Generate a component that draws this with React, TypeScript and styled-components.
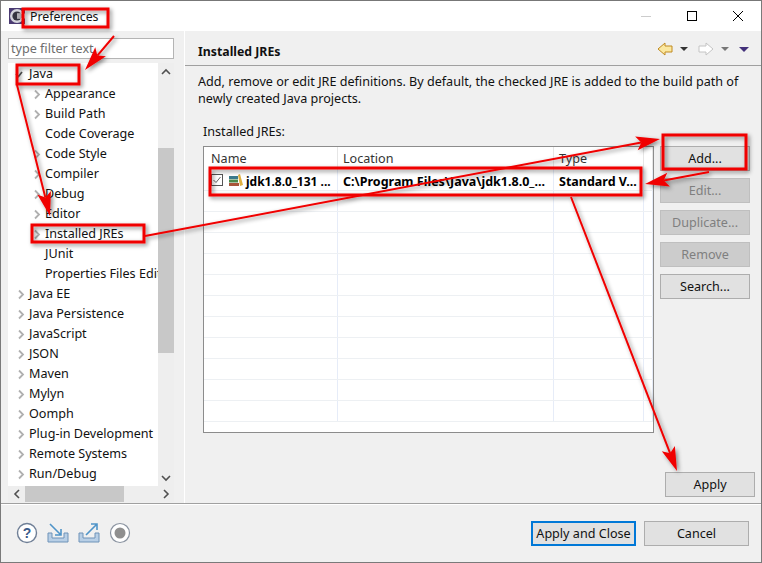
import React from "react";
import styled, { createGlobalStyle } from "styled-components";

const Global = createGlobalStyle`
  html, body { margin: 0; padding: 0; background: #f0f0f0; }
  * { box-sizing: border-box; }
  #root { width: 762px; height: 563px; }
`;

const Window = styled.div`
  position: relative;
  width: 762px;
  height: 563px;
  display: flex;
  flex-direction: column;
  background: #f0f0f0;
  border: 1px solid #7a7a7a;
  border-top-color: #777;
  font-family: "Noto Sans", "Open Sans", sans-serif;
  font-size: 12.6px;
  color: #111;
  overflow: hidden;
`;

const TitleBar = styled.div`
  height: 30px;
  flex: none;
  background: #fff;
  display: flex;
  align-items: center;
  padding-left: 8px;
`;
const TitleText = styled.span`
  font-size: 12.3px;
  flex: 1;
  margin: 1px 0 0 5px;
`;
const WinBtn = styled.div`
  width: 46px;
  height: 30px;
  display: flex;
  align-items: center;
  justify-content: center;
`;

const Main = styled.div`
  flex: 1;
  display: flex;
  min-height: 0;
`;

const Left = styled.div`
  width: 184px;
  flex: none;
  padding: 7px 10px 0 7px;
  display: flex;
  flex-direction: column;
  border-right: 1px solid #fff;
`;
const Filter = styled.div`
  height: 21px;
  flex: none;
  border: 1px solid #b4b4b4;
  background: #fff;
  color: #6d6d6d;
  line-height: 19px;
  padding-left: 2px;
  margin-bottom: 4px;
  white-space: nowrap;
`;
const TreeWrap = styled.div`
  flex: 1;
  display: grid;
  grid-template-columns: 150px 16px;
  grid-template-rows: 423px 16px;
  min-height: 0;
`;
const Tree = styled.div`
  background: #fff;
  overflow: hidden;
`;
const Row = styled.div<{ $level: number }>`
  height: 20px;
  display: flex;
  align-items: center;
  padding: 2px 0 0 ${(p) => (p.$level ? 21 : 5)}px;
  white-space: nowrap;
  line-height: 18px;
`;
const Twisty = styled.span`
  width: 16px;
  flex: none;
  display: flex;
`;
const VBar = styled.div`
  background: #eee;
  display: flex;
  flex-direction: column;
  justify-content: space-between;
`;
const VTrack = styled.div`
  flex: 1;
  padding: 68px 0 116px;
  display: flex;
`;
const VThumb = styled.div`
  flex: 1;
  background: #c8c8c8;
`;
const ArrowBox = styled.div`
  height: 17px;
  display: flex;
  align-items: center;
  justify-content: center;
  flex: none;
`;
const HBar = styled.div`
  background: #eee;
  display: flex;
  align-items: center;
  grid-column: 1 / span 2;
`;
const HBtn = styled.div`
  width: 17px;
  height: 16px;
  flex: none;
  display: flex;
  align-items: center;
  justify-content: center;
`;
const HTrack = styled.div`
  flex: 1;
  height: 16px;
  padding-right: 33px;
  display: flex;
`;
const HThumb = styled.div`
  flex: 1;
  background: #c8c8c8;
`;

const Right = styled.div`
  flex: 1;
  min-width: 0;
  display: flex;
  flex-direction: column;
`;
const Header = styled.div`
  height: 35px;
  flex: none;
  display: flex;
  align-items: center;
  border-bottom: 1px solid #a0a0a0;
  padding: 6px 12px 0 13px;
`;
const HeaderTitle = styled.div`
  flex: 1;
  font-weight: 700;
  font-size: 12.3px;
`;
const NavIcons = styled.svg`
  margin-top: -4px;
  flex: none;
`;
const Desc = styled.p`
  margin: 0;
  padding: 7px 0 0 13px;
  line-height: 17px;
  height: 56px;
  flex: none;
  white-space: pre;
`;
const Label = styled.div`
  padding: 1px 0 0 18px;
  height: 24px;
  line-height: 18px;
  flex: none;
`;
const Content = styled.div`
  display: flex;
  gap: 6px;
  padding-left: 18px;
  height: 287px;
  flex: none;
`;
const Table = styled.div`
  width: 451px;
  height: 287px;
  flex: none;
  background: #fff;
  border: 1px solid #8c8c8c;
  overflow: hidden;
`;
const THead = styled.div`
  display: grid;
  grid-template-columns: 134px 216px 90px 9px;
  height: 23px;
`;
const Th = styled.div`
  border-right: 1px solid #e6e6e6;
  padding: 3px 0 0 5px;
  line-height: 18px;
  color: #333;
  &:first-child { padding-left: 7px; }
`;
const Tr = styled.div`
  display: grid;
  grid-template-columns: 134px 216px 90px 9px;
  height: 21px;
  border-bottom: 1px solid #edf0f3;
`;
const Td = styled.div<{ $first?: boolean }>`
  border-right: 1px solid #e6ecf8;
  padding: 2px 0 0 5px;
  display: flex;
  align-items: center;
  font-weight: 700;
  font-size: ${(p) => (p.$first ? 12 : 12.5)}px;
  white-space: nowrap;
  overflow: hidden;
  color: #000;
`;
const Check = styled.span`
  width: 12px;
  height: 12px;
  border: 1px solid #555;
  display: flex;
  margin: -2px 5px 0 2px;
  flex: none;
  background: #fff;
`;
const JdkIcon = styled.svg`
  margin: -2px 2px 0 0;
  flex: none;
`;
const Side = styled.div`
  display: flex;
  flex-direction: column;
  gap: 7px;
  width: 90px;
`;
const Button = styled.button<{ $disabled?: boolean; $w?: number; $primary?: boolean }>`
  width: ${(p) => p.$w ?? 90}px;
  height: 25px;
  flex: none;
  padding: 0;
  font: inherit;
  background: ${(p) => (p.$disabled ? "#cccccc" : "#e1e1e1")};
  color: ${(p) => (p.$disabled ? "#7f7f7f" : "#111")};
  border: ${(p) => (p.$primary ? "2px solid #0078d7" : p.$disabled ? "1px solid #bfbfbf" : "1px solid #adadad")};
`;
const ApplyRow = styled.div`
  display: flex;
  justify-content: flex-end;
  padding: 39px 6px 0 0;
`;

const Footer = styled.div`
  height: 59px;
  flex: none;
  border-top: 1px solid #a0a0a0;
  box-shadow: inset 0 1px 0 #fff;
  display: flex;
  align-items: flex-start;
  padding: 17px 12px 0 15px;
`;
const FootIcons = styled.div`
  display: flex;
  gap: 9px;
  flex: 1;
  padding-top: 1px;
`;
const FootBtns = styled.div`
  display: flex;
  gap: 8px;
`;
const Overlay = styled.svg`
  position: absolute;
  left: -1px;
  top: -1px;
  width: 762px;
  height: 563px;
  pointer-events: none;
`;

const Chev = ({ open }: { open?: boolean }) =>
  open ? (
    <svg width="16" height="16" viewBox="0 0 16 16">
      <path d="M3 8 L5.5 10.5 L9 6" fill="none" stroke="#555" strokeWidth="1.7" />
    </svg>
  ) : (
    <svg width="16" height="16" viewBox="0 0 16 16">
      <path d="M6 4.5 L10 8.5 L6 12.5" fill="none" stroke="#b0b0b0" strokeWidth="1.8" />
    </svg>
  );

const items: [string, number, boolean][] = [
  ["Java", 0, true], ["Appearance", 1, true], ["Build Path", 1, true], ["Code Coverage", 1, false],
  ["Code Style", 1, true], ["Compiler", 1, true], ["Debug", 1, true], ["Editor", 1, true],
  ["Installed JREs", 1, true], ["JUnit", 1, false], ["Properties Files Edit", 1, false],
  ["Java EE", 0, true], ["Java Persistence", 0, true], ["JavaScript", 0, true], ["JSON", 0, true],
  ["Maven", 0, true], ["Mylyn", 0, true], ["Oomph", 0, true], ["Plug-in Development", 0, true],
  ["Remote Systems", 0, true], ["Run/Debug", 0, true],
];

const Rect = ({ x, y, w, h }: { x: number; y: number; w: number; h: number }) => (
  <rect x={x} y={y} width={w} height={h} fill="none" stroke="#f00000" strokeWidth="3" />
);
const Arrow = ({ x1, y1, x2, y2 }: { x1: number; y1: number; x2: number; y2: number }) => {
  const a = Math.atan2(y2 - y1, x2 - x1);
  const L = 24, W = 7;
  const bx = x2 - L * Math.cos(a), by = y2 - L * Math.sin(a);
  const nx = -Math.sin(a) * W, ny = Math.cos(a) * W;
  const ix = x2 - (L - 5) * Math.cos(a), iy = y2 - (L - 5) * Math.sin(a);
  return (
    <g>
      <line x1={x1} y1={y1} x2={ix} y2={iy} stroke="#f00000" strokeWidth="2" />
      <polygon points={`${x2},${y2} ${bx + nx},${by + ny} ${ix},${iy} ${bx - nx},${by - ny}`} fill="#f00000" />
    </g>
  );
};

export default function App() {
  const rows = Array.from({ length: 12 });
  return (
    <Window>
      <Global />
      <TitleBar>
        <svg width="16" height="16" viewBox="0 0 16 16">
          <rect x="0" y="0" width="16" height="16" fill="#4a3a72" />
          <circle cx="8" cy="8" r="7" fill="#d4d4dc" />
          <circle cx="8" cy="8" r="4.6" fill="#34343f" />
          <path d="M8 5.5 h8 v5 h-8 z" fill="#fff" />
          <path d="M8 7 h7 M8 9 h7" stroke="#34343f" strokeWidth="0.8" />
        </svg>
        <TitleText>Preferences</TitleText>
        <WinBtn>
          <svg width="10" height="10" viewBox="0 0 10 10"><path d="M0 5.5 H10" stroke="#ccc" /></svg>
        </WinBtn>
        <WinBtn>
          <svg width="10" height="10" viewBox="0 0 10 10"><rect x="0.5" y="0.5" width="9" height="9" fill="none" stroke="#000" /></svg>
        </WinBtn>
        <WinBtn>
          <svg width="10" height="10" viewBox="0 0 10 10"><path d="M0 0 L10 10 M10 0 L0 10" stroke="#000" /></svg>
        </WinBtn>
      </TitleBar>
      <Main>
        <Left>
          <Filter>type filter text</Filter>
          <TreeWrap>
            <Tree>
              {items.map(([t, l, c], i) => (
                <Row key={i} $level={l}>
                  <Twisty>{c ? <Chev open={t === "Java"} /> : null}</Twisty>
                  <span>{t}</span>
                </Row>
              ))}
            </Tree>
            <VBar>
              <ArrowBox>
                <svg width="10" height="8" viewBox="0 0 10 8"><path d="M1 6 L5 2 L9 6" fill="none" stroke="#505050" strokeWidth="1.6" /></svg>
              </ArrowBox>
              <VTrack><VThumb /></VTrack>
              <ArrowBox>
                <svg width="10" height="8" viewBox="0 0 10 8"><path d="M1 2 L5 6 L9 2" fill="none" stroke="#505050" strokeWidth="1.6" /></svg>
              </ArrowBox>
            </VBar>
            <HBar>
              <HBtn>
                <svg width="8" height="10" viewBox="0 0 8 10"><path d="M6 1 L2 5 L6 9" fill="none" stroke="#505050" strokeWidth="1.6" /></svg>
              </HBtn>
              <HTrack><HThumb /></HTrack>
              <HBtn>
                <svg width="8" height="10" viewBox="0 0 8 10"><path d="M2 1 L6 5 L2 9" fill="none" stroke="#505050" strokeWidth="1.6" /></svg>
              </HBtn>
            </HBar>
          </TreeWrap>
        </Left>
        <Right>
          <Header>
            <HeaderTitle>Installed JREs</HeaderTitle>
            <NavIcons width="92" height="16" viewBox="0 0 92 16">
              <path d="M1 8 L8 2 V5 H15 V11 H8 V14 Z" fill="#fbe8a0" stroke="#c08a20" />
              <path d="M23 6 H31 L27 10 Z" fill="#333" />
              <path d="M56 8 L49 2 V5 H42 V11 H49 V14 Z" fill="#fff" stroke="#c4c4c4" />
              <path d="M64 6 H72 L68 10 Z" fill="#777" />
              <path d="M82 6 H92 L87 11 Z" fill="#43307a" />
            </NavIcons>
          </Header>
          <Desc>{"Add, remove or edit JRE definitions. By default, the checked JRE is added to the build path of\nnewly created Java projects."}</Desc>
          <Label>Installed JREs:</Label>
          <Content>
            <Table>
              <THead>
                <Th>Name</Th><Th>Location</Th><Th>Type</Th><Th />
              </THead>
              {rows.map((_, i) => (
                <Tr key={i}>
                  <Td $first>
                    {i === 0 && (
                      <>
                        <Check>
                          <svg width="10" height="10" viewBox="0 0 10 10"><path d="M1.5 5 L4 7.5 L8.5 2" fill="none" stroke="#666" /></svg>
                        </Check>
                        <JdkIcon width="16" height="16" viewBox="0 0 16 16">
                          <rect x="1" y="4" width="9" height="3" fill="#3b7a8c" />
                          <rect x="1" y="7.5" width="9" height="3" fill="#4b8a4b" />
                          <rect x="1" y="11" width="10" height="3" fill="#a9553a" />
                          <path d="M10 3 L12 2 L15 13 L12 14 Z" fill="#e0b040" />
                        </JdkIcon>
                        jdk1.8.0_131 ...
                      </>
                    )}
                  </Td>
                  <Td>{i === 0 && "C:\\Program Files\\Java\\jdk1.8.0_..."}</Td>
                  <Td>{i === 0 && "Standard V..."}</Td>
                  <Td />
                </Tr>
              ))}
            </Table>
            <Side>
              <Button>Add...</Button>
              <Button $disabled>Edit...</Button>
              <Button $disabled>Duplicate...</Button>
              <Button $disabled>Remove</Button>
              <Button>Search...</Button>
            </Side>
          </Content>
          <ApplyRow>
            <Button>Apply</Button>
          </ApplyRow>
        </Right>
      </Main>
      <Footer>
        <FootIcons>
          <svg width="22" height="22" viewBox="0 0 22 22">
            <circle cx="11" cy="11" r="9.5" fill="#fff" stroke="#6f7f96" strokeWidth="1.4" />
            <text x="11" y="16" textAnchor="middle" fontFamily="Liberation Sans, sans-serif" fontWeight="700" fontSize="14" fill="#3a5a8a">?</text>
          </svg>
          <svg width="22" height="22" viewBox="0 0 22 22">
            <path d="M1 11 V20 H21 V11 H17 V16 H5 V11 Z" fill="#b8cfe6" stroke="#6f93b8" />
            <path d="M3 2 L14 13 M14 7 V13 H8" fill="none" stroke="#4f94c8" strokeWidth="1.6" />
          </svg>
          <svg width="22" height="22" viewBox="0 0 22 22">
            <path d="M1 11 V20 H21 V11 H17 V16 H5 V11 Z" fill="#b8cfe6" stroke="#6f93b8" />
            <path d="M8 13 L19 2 M13 2 H19 V8" fill="none" stroke="#4f94c8" strokeWidth="1.6" />
          </svg>
          <svg width="22" height="22" viewBox="0 0 22 22">
            <circle cx="11" cy="11" r="9.5" fill="#fff" stroke="#8a93a0" strokeWidth="1.2" />
            <circle cx="11" cy="11" r="5.5" fill="#8f8f8f" />
          </svg>
        </FootIcons>
        <FootBtns>
          <Button $primary $w={105}>Apply and Close</Button>
          <Button $w={105}>Cancel</Button>
        </FootBtns>
      </Footer>
      <Overlay viewBox="0 0 762 563">
        <defs>
          <filter id="s" x="-5%" y="-5%" width="110%" height="110%">
            <feDropShadow dx="2" dy="2" stdDeviation="2" floodColor="#000" floodOpacity="0.45" />
          </filter>
        </defs>
        <g filter="url(#s)">
          <Rect x={23} y={9} w={85} h={18} />
          <Rect x={17} y={65} w={62} h={19} />
          <Rect x={32} y={225} w={112} h={17} />
          <Rect x={663} y={135} w={83} h={34} />
          <Rect x={210} y={168} w={431} h={27} />
          <Arrow x1={114} y1={36} x2={85} y2={70} />
          <Arrow x1={17} y1={85} x2={50} y2={216} />
          <Arrow x1={145} y1={236} x2={660} y2={139} />
          <Arrow x1={709} y1={172} x2={645} y2={184} />
          <Arrow x1={571} y1={197} x2={677} y2={471} />
        </g>
      </Overlay>
    </Window>
  );
}
